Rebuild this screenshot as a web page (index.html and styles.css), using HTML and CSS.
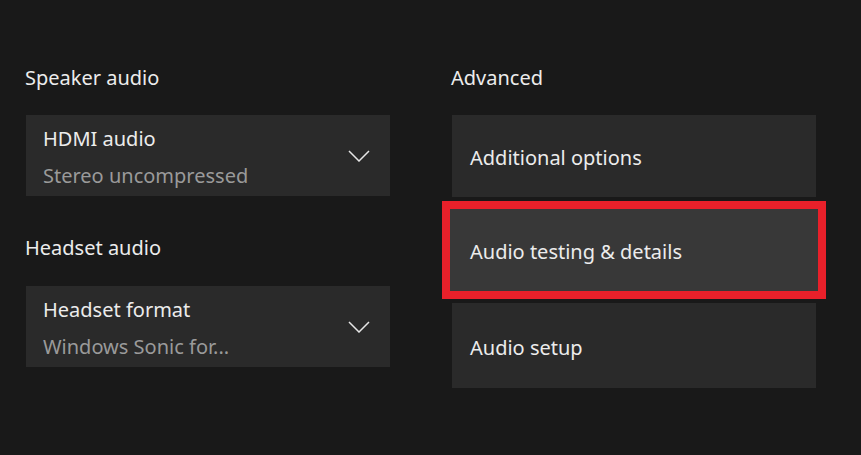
FILE: index.html
```html
<!DOCTYPE html>
<html>
<head>
<meta charset="utf-8">
<link rel="stylesheet" href="styles.css">
</head>
<body>
<div class="page">
  <div class="col">
    <div class="label">Speaker audio</div>
    <div class="card select">
      <div class="texts">
        <div class="title">HDMI audio</div>
        <div class="sub">Stereo uncompressed</div>
      </div>
      <svg class="chev" width="22" height="12" viewBox="0 0 22 12"><path d="M1 1 L11 11 L21 1" fill="none" stroke="#e6e6e6" stroke-width="1.5"/></svg>
    </div>
    <div class="label second">Headset audio</div>
    <div class="card select">
      <div class="texts">
        <div class="title">Headset format</div>
        <div class="sub">Windows Sonic for...</div>
      </div>
      <svg class="chev" width="22" height="12" viewBox="0 0 22 12"><path d="M1 1 L11 11 L21 1" fill="none" stroke="#e6e6e6" stroke-width="1.5"/></svg>
    </div>
  </div>
  <div class="col">
    <div class="label">Advanced</div>
    <div class="list">
      <div class="card item">Additional options</div>
      <div class="card item focused">Audio testing &amp; details</div>
      <div class="card item last">Audio setup</div>
    </div>
  </div>
</div>
</body>
</html>
```
FILE: styles.css
```css
html, body {
  margin: 0;
  padding: 0;
  background: #191919;
  width: 861px;
  height: 455px;
  overflow: hidden;
}
body {
  font-family: "Noto Sans", "Open Sans", sans-serif;
  color: #e8e8e8;
}
.page {
  display: flex;
  gap: 62px;
  padding: 64px 0 0 26px;
}
.col {
  width: 364px;
  display: flex;
  flex-direction: column;
}
.label {
  font-size: 20px;
  line-height: 28px;
  height: 51px;
  margin-left: -1px;
  color: #ececec;
}
.label.second {
  margin-top: 38px;
  height: 52px;
}
.card {
  background: #2a2a2a;
  box-sizing: border-box;
}
.select {
  height: 81px;
  display: flex;
  align-items: center;
  justify-content: space-between;
  padding: 0 20px 0 17px;
}
.texts {
  display: flex;
  flex-direction: column;
  gap: 11px;
  margin-top: 3px;
}
.title {
  font-size: 20px;
  line-height: 26px;
  color: #ececec;
}
.sub {
  font-size: 20px;
  line-height: 26px;
  color: #9a9a9a;
}
.list {
  display: flex;
  flex-direction: column;
  gap: 12px;
}
.item {
  height: 82px;
  display: flex;
  align-items: center;
  padding-left: 18px;
  padding-top: 2px;
  font-size: 20px;
  color: #ececec;
}
.item.last {
  height: 85px;
  padding-top: 3px;
}
.focused {
  background: #383838;
  outline: 8px solid #e8202a;
  margin: 0 -2px;
  padding-left: 20px;
}
```
